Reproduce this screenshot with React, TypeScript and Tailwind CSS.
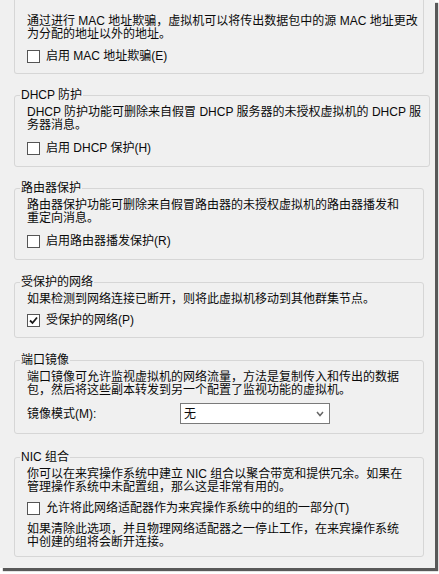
import type { ReactNode } from 'react'

function Checkbox({ checked = false }: { checked?: boolean }) {
  return (
    <span className="w-[13px] h-[13px] shrink-0 border border-[#555] bg-white flex items-center justify-center">
      {checked && (
        <svg width="9" height="9" viewBox="0 0 9 9">
          <path d="M1 4.5 L3.5 7 L8 1.5" fill="none" stroke="#1a1a1a" strokeWidth="1.8" />
        </svg>
      )}
    </span>
  )
}

function CheckRow({ label, checked, className = '' }: { label: string; checked?: boolean; className?: string }) {
  return (
    <div className={`flex items-center gap-[6px] h-[13px] ${className}`}>
      <Checkbox checked={checked} />
      <span className="leading-[13px] whitespace-nowrap">{label}</span>
    </div>
  )
}

function Lines({ lines, className = '' }: { lines: string[]; className?: string }) {
  return (
    <div className={className}>
      {lines.map((l) => (
        <div key={l} className="leading-[13px] h-[13px] whitespace-nowrap">
          {l}
        </div>
      ))}
    </div>
  )
}

function Group({ title, children, className = '', bodyClass = '' }: { title: string; children: ReactNode; className?: string; bodyClass?: string }) {
  return (
    <fieldset className={`w-[410px] ml-[14px] border border-[#d6d6d6] rounded-[3px] ${className}`}>
      <legend className="ml-[5px] px-[1px] leading-[14px] h-[14px]">{title}</legend>
      <div className={`pl-[12px] pr-2 pt-[4px] ${bodyClass}`}>{children}</div>
    </fieldset>
  )
}

export default function App() {
  return (
    <div className="w-[439px] h-[574px] bg-white overflow-hidden">
      <div className="w-[435px] h-[568px] bg-[#f0f0f0] text-[12px] text-[#0a0a0a] font-['Liberation_Sans','Noto_Sans_CJK_SC',sans-serif] shadow-[3px_3px_1px_rgba(70,70,70,0.9)] overflow-hidden">
        {/* top group, header scrolled out of view */}
        <div className="w-[410px] ml-[14px] border-x border-b border-[#d6d6d6] rounded-b-[3px] pl-[12px] pt-[15px] pb-[10px]">
          <Lines
            lines={['通过进行 MAC 地址欺骗，虚拟机可以将传出数据包中的源 MAC 地址更改', '为分配的地址以外的地址。']}
          />
          <CheckRow label="启用 MAC 地址欺骗(E)" className="mt-[9px]" />
        </div>

        <Group title="DHCP 防护" className="mt-[14px]" bodyClass="pb-[11px]">
          <Lines lines={['DHCP 防护功能可删除来自假冒 DHCP 服务器的未授权虚拟机的 DHCP 服', '务器消息。']} />
          <CheckRow label="启用 DHCP 保护(H)" className="mt-[10px]" />
        </Group>

        <Group title="路由器保护" className="mt-[14px]" bodyClass="pb-[11px]">
          <Lines lines={['路由器保护功能可删除来自假冒路由器的未授权虚拟机的路由器播发和', '重定向消息。']} />
          <CheckRow label="启用路由器播发保护(R)" className="mt-[10px]" />
        </Group>

        <Group title="受保护的网络" className="mt-[15px]" bodyClass="pb-[10px]">
          <Lines lines={['如果检测到网络连接已断开，则将此虚拟机移动到其他群集节点。']} />
          <CheckRow label="受保护的网络(P)" checked className="mt-[8px]" />
        </Group>

        <Group title="端口镜像" className="mt-[15px]" bodyClass="pb-[9px]">
          <Lines lines={['端口镜像可允许监视虚拟机的网络流量，方法是复制传入和传出的数据', '包，然后将这些副本转发到另一个配置了监视功能的虚拟机。']} />
          <div className="flex items-center mt-[6px]">
            <span className="w-[153px] whitespace-nowrap">镜像模式(M):</span>
            <div className="w-[150px] h-[21px] bg-white border border-[#7a7a7a] flex items-center justify-between pl-[3px] pr-[5px]">
              <span>无</span>
              <svg width="8" height="6" viewBox="0 0 8 6">
                <path d="M1 1 L4 4.5 L7 1" fill="none" stroke="#666" strokeWidth="1.5" />
              </svg>
            </div>
          </div>
        </Group>

        <Group title="NIC 组合" className="mt-[16px]" bodyClass="pb-[7px]">
          <Lines lines={['你可以在来宾操作系统中建立 NIC 组合以聚合带宽和提供冗余。如果在', '管理操作系统中未配置组，那么这是非常有用的。']} />
          <CheckRow label="允许将此网络适配器作为来宾操作系统中的组的一部分(T)" className="mt-[8px]" />
          <Lines className="mt-[8px]" lines={['如果清除此选项，并且物理网络适配器之一停止工作，在来宾操作系统', '中创建的组将会断开连接。']} />
        </Group>
      </div>
    </div>
  )
}
